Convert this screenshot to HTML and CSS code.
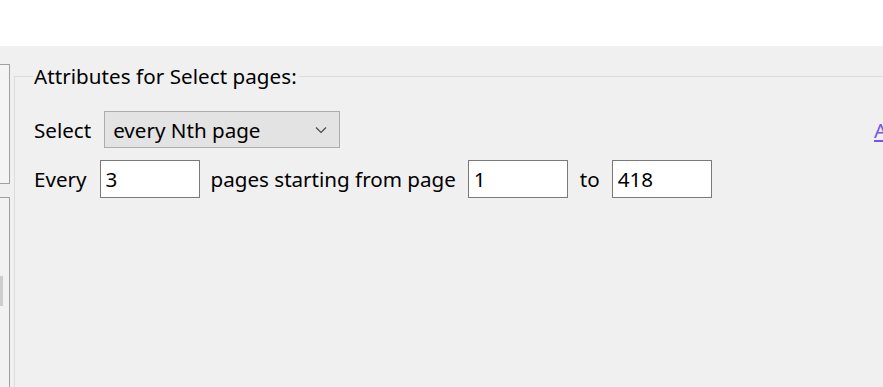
FILE: index.html
```html
<!DOCTYPE html>
<html>
<head>
<meta charset="utf-8">
<link rel="stylesheet" href="styles.css">
</head>
<body>
<div class="top"></div>
<div class="main">
  <div class="side">
    <div class="sidebox one"></div>
    <div class="sidebox two"><div class="thumb"></div></div>
  </div>
  <fieldset class="group">
    <legend class="legend">Attributes for Select pages:</legend>
    <div class="row row1">
      <span class="label">Select</span>
      <div class="combo"><span class="combo-text">every Nth page</span>
        <svg class="chev" width="12" height="8" viewBox="0 0 12 8"><path d="M1 1.5 L6 6.5 L11 1.5" fill="none" stroke="#444" stroke-width="1.1"/></svg>
      </div>
      <span class="spacer"></span>
      <a class="link" href="#">A</a>
    </div>
    <div class="row row2">
      <span class="label">Every</span>
      <div class="input first">3</div>
      <span class="label">pages starting from page</span>
      <div class="input">1</div>
      <span class="label">to</span>
      <div class="input">418</div>
    </div>
  </fieldset>
</div>
</body>
</html>
```
FILE: styles.css
```css
html, body {
  margin: 0;
  padding: 0;
  width: 883px;
  height: 387px;
  overflow: hidden;
  background: #f0f0f0;
  font-family: "Noto Sans", "Open Sans", sans-serif;
  font-size: 20.6px;
  color: #000;
}
.top {
  height: 46px;
  background: #fff;
}
.main {
  display: flex;
  height: 341px;
}
.side {
  width: 10px;
  flex: none;
  display: flex;
  flex-direction: column;
}
.sidebox {
  box-sizing: border-box;
  border-right: 1px solid #a0a0a0;
  border-top: 1px solid #a0a0a0;
}
.sidebox.one {
  margin-top: 18px;
  height: 120px;
  border-bottom: 1px solid #a0a0a0;
  background: #f4f4f4;
}
.sidebox.two {
  margin-top: 13px;
  flex: 1;
  background: #f2f2f2;
  padding-top: 78px;
}
.thumb {
  width: 3px;
  height: 30px;
  background: #cdcdcd;
}
.group {
  margin: 18px 0 0 4px;
  padding: 0 0 0 19px;
  border: 1px solid #dcdcdc;
  border-right: none;
  border-bottom: none;
  flex: 1;
  min-width: 0;
}
.legend {
  padding: 0 2px 0 1px;
  margin-left: -1px;
  line-height: 24px;
  letter-spacing: 0.05px;
}
.row {
  display: flex;
  align-items: center;
}
.row1 {
  margin-top: 23px;
  height: 37px;
}
.row2 {
  margin-top: 12px;
  height: 38px;
}
.label {
  white-space: nowrap;
}
.combo {
  box-sizing: border-box;
  margin-left: 13px;
  width: 236px;
  height: 37px;
  background: #e3e3e3;
  border: 1px solid #adadad;
  display: flex;
  align-items: center;
  padding: 0 10px 0 8px;
}
.combo-text {
  flex: 1;
}
.chev {
  margin-right: 2px;
}
.spacer {
  flex: 1;
}
.link {
  color: #7356e8;
  text-decoration: underline;
  margin-right: -8px;
  width: 17px;
  overflow: hidden;
}
.input {
  box-sizing: border-box;
  width: 100px;
  height: 38px;
  background: #fff;
  border: 1px solid #7a7a7a;
  padding: 0 5px;
  display: flex;
  align-items: center;
  margin: 0 12px;
}
.input.first {
  margin-left: 13px;
  margin-right: 11px;
}
```
